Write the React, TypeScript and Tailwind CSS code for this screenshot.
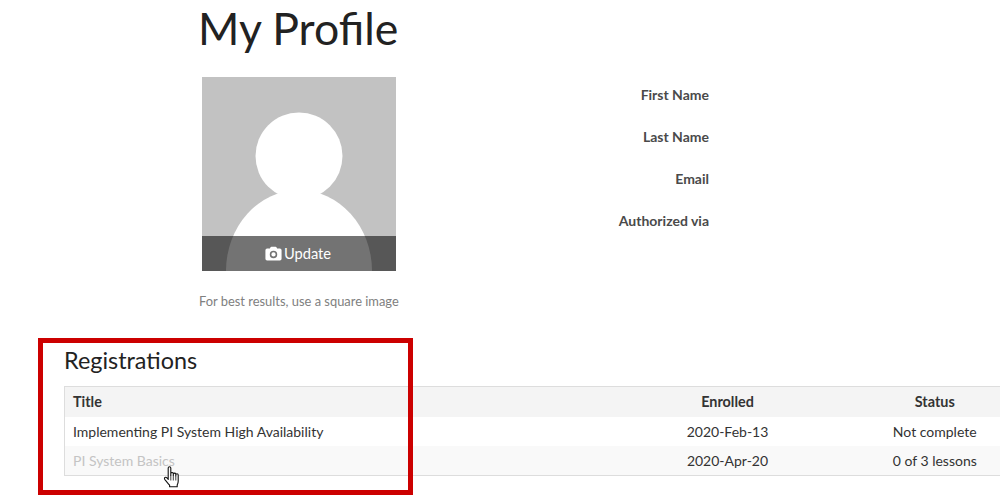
import React from "react";

function Avatar() {
  return (
    <svg viewBox="0 0 194 194" className="absolute inset-0 w-full h-full" aria-hidden="true">
      <circle cx="97" cy="79" r="43.5" fill="#ffffff" />
      <ellipse cx="97" cy="194" rx="73" ry="81" fill="#ffffff" />
    </svg>
  );
}

function Camera() {
  return (
    <svg viewBox="0 0 16 14" className="w-[17px] h-[15px]" aria-hidden="true">
      <path
        fillRule="evenodd"
        fill="#ffffff"
        d="M5.2 1.2 4.6 2.4H2A1.6 1.6 0 0 0 .4 4v8A1.6 1.6 0 0 0 2 13.6h12a1.6 1.6 0 0 0 1.6-1.6V4A1.6 1.6 0 0 0 14 2.4h-2.6l-.6-1.2A1 1 0 0 0 10 .6H6a1 1 0 0 0-.8.6ZM8 4.4a3.5 3.5 0 1 1 0 7 3.5 3.5 0 0 1 0-7Zm0 1.5a2 2 0 1 0 0 4 2 2 0 0 0 0-4Z"
      />
    </svg>
  );
}

function Hand() {
  return (
    <svg viewBox="0 0 18 24" className="absolute left-[163px] top-[465px] w-[18px] h-6" aria-hidden="true">
      <path
        d="M5.2 14.5V3a1.3 1.3 0 0 1 2.6 0v7.5-2a1.3 1.3 0 0 1 2.5 0v2-1.4a1.3 1.3 0 0 1 2.5 0v1.6-.8a1.2 1.2 0 0 1 2.4 0v6.3c0 1.6-.4 2.7-1 3.9v1.6H6.6v-1.5c-1.2-1.3-3-3.6-4.7-5.6-.7-.9-.5-1.7.1-2.1.7-.4 1.4-.2 2 .5l1.2 1Z"
        fill="#ffffff"
        stroke="#111111"
        strokeWidth="1.1"
        strokeLinejoin="round"
      />
      <path d="M7.8 10.5v5M10.3 10.5v5M12.8 10.8v4.7" stroke="#111111" strokeWidth="0.8" fill="none" />
    </svg>
  );
}

const labels = ["First Name", "Last Name", "Email", "Authorized via"];

export default function App() {
  return (
    <div className="relative w-[1000px] h-[495px] overflow-hidden bg-white text-[#333333] font-['Lato','Liberation_Sans',sans-serif]">
      <div className="flex h-[338px]">
        <div className="w-[597px] pl-[198px] flex flex-col">
          <h1 className="text-[44.6px] leading-[52px] h-[77px] pt-[2px] font-normal text-[#222222] whitespace-nowrap">My Profile</h1>
          <div className="relative ml-[4px] w-[194px] h-[194px] bg-[#c2c2c2] overflow-hidden">
            <Avatar />
            <div className="absolute left-0 right-0 bottom-0 h-[35px] pr-[2px] bg-black/55 flex items-center justify-center gap-[2px] text-white text-[14.7px]">
              <Camera />
              <span>Update</span>
            </div>
          </div>
          <p className="mt-[21px] ml-[1px] text-[12.9px] leading-[18px] text-[#808080] whitespace-nowrap">For best results, use a square image</p>
        </div>
        <div className="w-[112px] pt-[85px] flex flex-col gap-[22px] items-end">
          {labels.map((l) => (
            <div key={l} className="h-5 text-sm leading-5 font-bold text-[#4a4a4a] whitespace-nowrap">{l}</div>
          ))}
        </div>
      </div>

      <div className="pl-[64px]">
        <h2 className="text-[23.4px] leading-[30px] h-[48px] pt-[7px] font-normal text-[#222222]">Registrations</h2>
        <table className="w-[986px] table-fixed border-collapse border border-[#dddddd] text-sm text-[#333333]">
          <colgroup>
            <col className="w-[571px]" />
            <col className="w-[184px]" />
            <col className="w-[231px]" />
          </colgroup>
          <thead>
            <tr className="h-[30px] bg-[#f4f4f4] font-bold">
              <th className="pl-2 pt-px text-left text-[14.4px]">Title</th>
              <th className="pt-px text-center text-[14.4px]">Enrolled</th>
              <th className="pt-px text-center text-[14.4px]">Status</th>
            </tr>
          </thead>
          <tbody>
            <tr className="h-[29px] bg-white">
              <td className="pl-2 pt-px">Implementing PI System High Availability</td>
              <td className="text-center pt-px">2020-Feb-13</td>
              <td className="text-center pt-px">Not complete</td>
            </tr>
            <tr className="h-[30px] bg-[#f9f9f9]">
              <td className="pl-2 pt-px text-[#c4c4c4]">PI System Basics</td>
              <td className="text-center pt-px">2020-Apr-20</td>
              <td className="text-center pt-px">0 of 3 lessons</td>
            </tr>
          </tbody>
        </table>
      </div>

      <div className="absolute left-[38px] top-[338px] w-[375px] h-[157px] border-[5px] border-[#cc0000]" />
      <Hand />
    </div>
  );
}
